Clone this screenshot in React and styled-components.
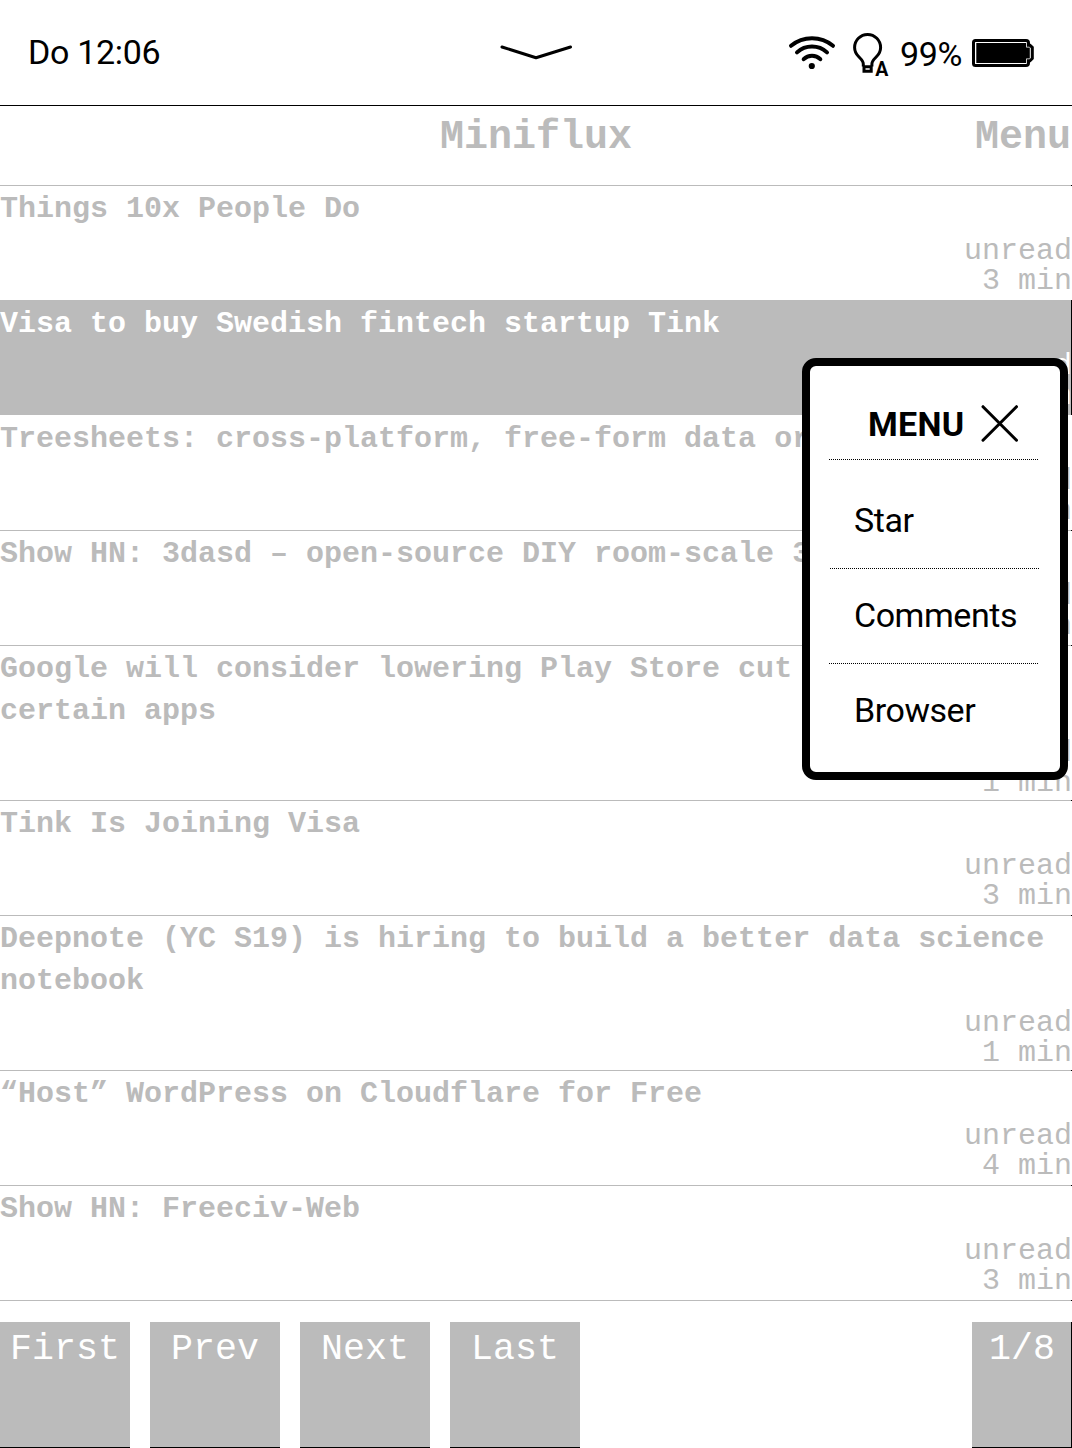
import React from "react";
import styled, { createGlobalStyle, css } from "styled-components";

const GREY = "#bbbbbb";

const GlobalStyle = createGlobalStyle`
  *, *::before, *::after { box-sizing: border-box; }
  body { margin: 0; background: #fff; }
`;

const Screen = styled.div`
  position: relative;
  display: flex;
  flex-direction: column;
  width: 1072px;
  height: 1448px;
  overflow: hidden;
  background: #fff;
  color: ${GREY};
  font-family: "Liberation Mono", monospace;
  font-variant-ligatures: none;
`;

const StatusBar = styled.header`
  display: grid;
  grid-template-columns: 1fr 72px 1fr;
  align-items: center;
  flex: none;
  height: 106px;
  padding: 0 38px 0 28px;
  border-bottom: 1px solid #000;
  color: #000;
  font-family: Roboto, sans-serif;
`;

const Clock = styled.span`
  padding-bottom: 2px;
  font-size: 34px;
  line-height: 40px;
  letter-spacing: -0.3px;
`;

const Chevron = styled.svg`
  display: block;
  width: 72px;
  height: 16px;
  margin-left: 5px;
`;

const StatusIcons = styled.div`
  display: flex;
  align-items: center;
  justify-content: flex-end;
`;

const Icon = styled.svg`
  display: block;
  flex: none;
  width: ${(p) => p.$w}px;
  height: 46px;
  margin-left: ${(p) => p.$gap || 0}px;
  overflow: visible;
`;

const Percent = styled.span`
  width: 63px;
  margin-left: 10px;
  padding-top: 2px;
  font-size: 34px;
  line-height: 40px;
  letter-spacing: -0.3px;
`;

const TitleBar = styled.div`
  display: grid;
  grid-template-columns: 1fr auto 1fr;
  flex: none;
  height: 79px;
  padding-top: 9px;
  font-size: 40px;
  line-height: 45px;
  font-weight: 700;
`;

const AppTitle = styled.h1`
  grid-column: 2;
  margin: 0;
  font: inherit;
`;

const MenuLink = styled.span`
  margin-right: 1px;
  text-align: right;
`;

const EntryList = styled.ul`
  display: flex;
  flex-direction: column;
  flex: none;
  margin: 0;
  padding: 0;
  list-style: none;
`;

const Entry = styled.li`
  display: flex;
  flex-direction: column;
  height: ${(p) => (p.$tall ? 155 : 115)}px;
  padding-top: 3px;
  background: linear-gradient(90deg, ${GREY} 1071px, #000 1071px) top / 100% 1px no-repeat;
  ${(p) =>
    p.$selected &&
    css`
      background: linear-gradient(90deg, ${GREY} 1071px, #000 1071px);
      color: #fff;
    `}
  ${(p) => p.$plain && css`background: none;`}
`;

const EntryTitle = styled.div`
  font-size: 30px;
  line-height: 42px;
  font-weight: 700;
  white-space: pre;
`;

const Meta = styled.div`
  padding-top: 6px;
  font-size: 30px;
  line-height: 30px;
  text-align: right;
`;

const Pager = styled.footer`
  display: flex;
  gap: 20px;
  height: 148px;
  padding-top: 22px;
  background: linear-gradient(90deg, ${GREY} 1071px, #000 1071px) top / 100% 1px no-repeat;
`;

const PageButton = styled.div`
  width: 130px;
  height: 126px;
  padding-top: 7px;
  border-bottom: 1px solid #000;
  background: ${GREY};
  color: #fff;
  font-size: 36.6px;
  line-height: 42px;
  text-align: center;
`;

const PageCount = styled(PageButton)`
  width: 100px;
  margin-left: auto;
  padding-left: 1px;
  border-right: 1px solid #000;
`;

const Popup = styled.div`
  position: absolute;
  left: 802px;
  top: 358px;
  display: flex;
  flex-direction: column;
  width: 266px;
  height: 422px;
  padding: 0 19px;
  border: 8px solid #000;
  border-radius: 14px;
  background: #fff;
  color: #000;
  font-family: Roboto, sans-serif;
  font-size: 34px;
  line-height: 40px;
`;

const PopupHead = styled.div`
  display: flex;
  align-items: center;
  gap: 17px;
  height: 93px;
  padding: 23px 0 0 39px;
  font-weight: 700;
  letter-spacing: 0.25px;
`;

const CloseIcon = styled.svg`
  display: block;
  flex: none;
  width: 38px;
  height: 38px;
`;

const PopupItem = styled.div`
  display: flex;
  align-items: center;
  height: ${(p) => p.$h}px;
  padding: ${(p) => p.$top || 0}px 0 ${(p) => p.$bottom || 0}px 25px;
  letter-spacing: -0.45px;
`;

const Divider = styled.div`
  flex: none;
  width: 210px;
  height: 1px;
  margin-left: ${(p) => p.$shift || 0}px;
  background: repeating-linear-gradient(90deg, #000 0 1px, #fff 1px 2px);
`;

const entries = [
  { title: "Things 10x People Do", time: "3 min" },
  { title: "Visa to buy Swedish fintech startup Tink", time: "3 min", selected: true },
  { title: "Treesheets: cross-platform, free-form data or", time: "1 min", plain: true },
  { title: "Show HN: 3dasd – open-source DIY room-scale 3", time: "1 min" },
  { title: "Google will consider lowering Play Store cut\ncertain apps", time: "1 min", tall: true },
  { title: "Tink Is Joining Visa", time: "3 min" },
  { title: "Deepnote (YC S19) is hiring to build a better data science\nnotebook", time: "1 min", tall: true },
  { title: "“Host” WordPress on Cloudflare for Free", time: "4 min" },
  { title: "Show HN: Freeciv-Web", time: "3 min" },
];

const WifiIcon = () => (
  <Icon $w={48} viewBox="788 30 48 46" fill="none" stroke="#000" strokeWidth="4" strokeLinecap="round">
    <path d="M791 45.8A33 33 0 0 1 833 45.8" />
    <path d="M797 52.4A22 22 0 0 1 827 52.4" />
    <path d="M803.7 59.2A11.5 11.5 0 0 1 820.3 59.2" />
    <circle cx="811.8" cy="66" r="3.1" fill="#000" stroke="none" />
  </Icon>
);

const BulbIcon = () => (
  <Icon $w={38} $gap={16} viewBox="852 30 38 46" fill="none" stroke="#000" strokeWidth="3">
    <path d="M863.3 66.5V64C863.3 61 861.5 59.5 858.8 56.8C856 54 854.6 51.5 854.6 47.5A13 13 0 0 1 880.6 47.5C880.6 51.5 879.2 54 876.4 56.8C873.7 59.5 871.9 61 871.9 64V66.5" />
    <path d="M864 66.8H871.2V71.3H864Z" />
    <text x="875.3" y="76" fill="#000" stroke="none" fontFamily="Roboto, sans-serif" fontSize="19.5" fontWeight="700">A</text>
  </Icon>
);

const BatteryIcon = () => (
  <Icon $w={64} $gap={7} viewBox="970 30 64 46">
    <path
      d="M975.5 40.5H1026Q1028.5 40.5 1028.5 43V45.3H1030L1032.3 47.5V58.5L1030 60.8H1028.5V63Q1028.5 65.5 1026 65.5H975.5Q973.5 65.5 973.5 63.5V42.5Q973.5 40.5 975.5 40.5Z"
      fill="#fff"
      stroke="#000"
      strokeWidth="3"
    />
    <path d="M976.3 43H1026.2V47.6H1029.8V58.4H1026.2V63H976.3Z" fill="#000" />
  </Icon>
);

export default function App() {
  return (
    <>
      <GlobalStyle />
      <Screen>
        <StatusBar>
          <Clock>Do 12:06</Clock>
          <Chevron viewBox="500 45 72 16" fill="none" stroke="#000" strokeWidth="3" strokeLinecap="round" strokeLinejoin="round">
            <path d="M502 47L536 57.7L570.5 47" />
          </Chevron>
          <StatusIcons>
            <WifiIcon />
            <BulbIcon />
            <Percent>99%</Percent>
            <BatteryIcon />
          </StatusIcons>
        </StatusBar>
        <TitleBar>
          <AppTitle>Miniflux</AppTitle>
          <MenuLink>Menu</MenuLink>
        </TitleBar>
        <EntryList>
          {entries.map((e) => (
            <Entry key={e.title} $tall={e.tall} $selected={e.selected} $plain={e.plain}>
              <EntryTitle>{e.title}</EntryTitle>
              <Meta>
                <div>unread</div>
                <div>{e.time}</div>
              </Meta>
            </Entry>
          ))}
        </EntryList>
        <Pager>
          <PageButton>First</PageButton>
          <PageButton>Prev</PageButton>
          <PageButton>Next</PageButton>
          <PageButton>Last</PageButton>
          <PageCount>1/8</PageCount>
        </Pager>
        <Popup>
          <PopupHead>
            <span>MENU</span>
            <CloseIcon viewBox="981 405 38 38" stroke="#000" strokeWidth="3" strokeLinecap="round">
              <path d="M983 406.7L1016.5 440.2M1016.5 406.7L983 440.2" />
            </CloseIcon>
          </PopupHead>
          <Divider />
          <PopupItem $h={108} $top={12}>Star</PopupItem>
          <Divider $shift={1} />
          <PopupItem $h={94} $bottom={2}>Comments</PopupItem>
          <Divider />
          <PopupItem $h={94} $bottom={2}>Browser</PopupItem>
        </Popup>
      </Screen>
    </>
  );
}
